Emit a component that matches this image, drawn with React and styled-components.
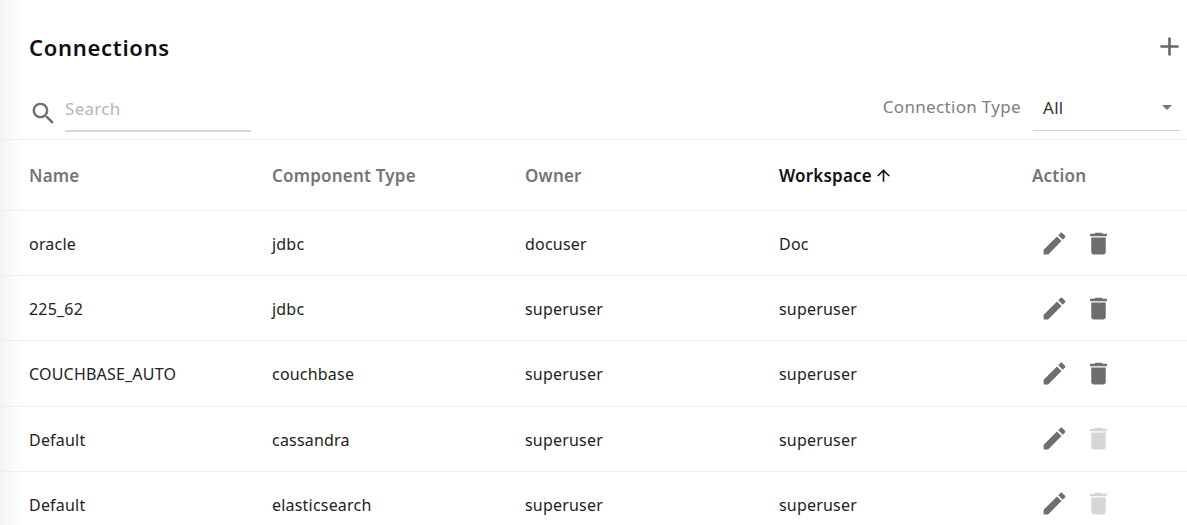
import styled, { createGlobalStyle } from "styled-components";

const GlobalStyle = createGlobalStyle`
  html, body {
    margin: 0;
    height: 100%;
    overflow: hidden;
    background: #fff;
    font-family: "Noto Sans", "Open Sans", sans-serif;
  }
`;

const Page = styled.div`
  height: 525px;
  overflow: hidden;
  background: linear-gradient(to right, #f3f3f3 0, #fbfbfb 14px, #fff 24px);
`;

const TitleBar = styled.div`
  display: flex;
  align-items: center;
  justify-content: space-between;
  height: 93px;
  padding: 0 2px 0 29px;
  box-sizing: border-box;
`;

const Title = styled.h1`
  margin: 0;
  font-size: 22px;
  font-weight: 600;
  letter-spacing: 0.7px;
  color: #111;
`;

const Toolbar = styled.div`
  display: flex;
  justify-content: space-between;
  height: 47px;
  padding: 0 7px 0 29px;
  box-sizing: border-box;
  border-bottom: 1px solid #eee;
`;

const SearchBox = styled.div`
  display: flex;
  align-items: flex-start;
  gap: 7px;
`;

const SearchField = styled.div`
  width: 186px;
  height: 39px;
  padding-top: 4px;
  box-sizing: border-box;
  border-bottom: 2px solid #d8d8d8;
  font-size: 17px;
  line-height: 24px;
  letter-spacing: 0.3px;
  color: #b5b5b5;
`;

const FilterBox = styled.div`
  display: flex;
  gap: 12px;
`;

const FilterLabel = styled.span`
  padding-top: 2px;
  font-size: 17px;
  line-height: 24px;
  letter-spacing: 0.33px;
  color: #808080;
`;

const Select = styled.div`
  display: flex;
  align-items: center;
  justify-content: space-between;
  width: 147px;
  height: 38px;
  padding: 0 8px 8px 10px;
  box-sizing: border-box;
  border-bottom: 1px solid #d4d4d4;
  font-size: 17px;
  letter-spacing: 0.3px;
  color: #333;
`;

const Caret = styled.span`
  width: 0;
  height: 0;
  border-left: 5px solid transparent;
  border-right: 5px solid transparent;
  border-top: 5px solid #757575;
`;

const Row = styled.div`
  display: grid;
  grid-template-columns: 243px 253px 254px 253px 1fr;
  align-items: center;
  height: ${(p) => (p.$header ? "71px" : "65.2px")};
  padding-left: 29px;
  box-sizing: border-box;
  border-bottom: 1px solid #eee;
`;

const HeadCell = styled.div`
  display: flex;
  align-items: center;
  gap: 2px;
  font-size: 17px;
  font-weight: 600;
  letter-spacing: 0.2px;
  color: ${(p) => (p.$active ? "#111" : "#757575")};
`;

const Cell = styled.div`
  padding-top: 2px;
  font-size: 16px;
  letter-spacing: 0.2px;
  color: #222;
`;

const Actions = styled.div`
  display: flex;
  gap: 15px;
  margin-left: 8px;
`;

const Icon = styled.svg`
  display: block;
  width: ${(p) => p.$size || 29}px;
  height: ${(p) => p.$size || 29}px;
  fill: ${(p) => p.$color || "#6e6e6e"};
  flex: none;
`;

const SearchIcon = styled(Icon)`
  margin-top: 6px;
`;

const paths = {
  add: "M19 13h-6v6h-2v-6H5v-2h6V5h2v6h6v2z",
  search:
    "M15.5 14h-.79l-.28-.27C15.41 12.59 16 11.11 16 9.5 16 5.91 13.09 3 9.5 3S3 5.91 3 9.5 5.91 16 9.5 16c1.61 0 3.09-.59 4.23-1.57l.27.28v.79l5 4.99L20.49 19l-4.99-5zm-6 0C7.01 14 5 11.99 5 9.5S7.01 5 9.5 5 14 7.01 14 9.5 11.99 14 9.5 14z",
  edit: "M3 17.25V21h3.75L17.81 9.94l-3.75-3.75L3 17.25zM20.71 7.04c.39-.39.39-1.02 0-1.41l-2.34-2.34c-.39-.39-1.02-.39-1.41 0l-1.83 1.83 3.75 3.75 1.83-1.83z",
  del: "M6 19c0 1.1.9 2 2 2h8c1.1 0 2-.9 2-2V7H6v12zM19 4h-3.5l-1-1h-5l-1 1H5v2h14V4z",
  up: "M4 12l1.41 1.41L11 7.83V20h2V7.83l5.58 5.59L20 12l-8-8-8 8z",
};

const connections = [
  { name: "oracle", type: "jdbc", owner: "docuser", workspace: "Doc", locked: false },
  { name: "225_62", type: "jdbc", owner: "superuser", workspace: "superuser", locked: false },
  { name: "COUCHBASE_AUTO", type: "couchbase", owner: "superuser", workspace: "superuser", locked: false },
  { name: "Default", type: "cassandra", owner: "superuser", workspace: "superuser", locked: true },
  { name: "Default", type: "elasticsearch", owner: "superuser", workspace: "superuser", locked: true },
];

export default function App() {
  return (
    <Page>
      <GlobalStyle />
      <TitleBar>
        <Title>Connections</Title>
        <Icon viewBox="0 0 24 24" $size={31} $color="#666">
          <path d={paths.add} />
        </Icon>
      </TitleBar>
      <Toolbar>
        <SearchBox>
          <SearchIcon viewBox="0 0 24 24">
            <path d={paths.search} />
          </SearchIcon>
          <SearchField>Search</SearchField>
        </SearchBox>
        <FilterBox>
          <FilterLabel>Connection Type</FilterLabel>
          <Select>
            All
            <Caret />
          </Select>
        </FilterBox>
      </Toolbar>
      <Row $header>
        <HeadCell>Name</HeadCell>
        <HeadCell>Component Type</HeadCell>
        <HeadCell>Owner</HeadCell>
        <HeadCell $active>
          Workspace
          <Icon viewBox="0 0 24 24" $size={19} $color="#111">
            <path d={paths.up} />
          </Icon>
        </HeadCell>
        <HeadCell>Action</HeadCell>
      </Row>
      {connections.map((c, i) => (
        <Row key={i}>
          <Cell>{c.name}</Cell>
          <Cell>{c.type}</Cell>
          <Cell>{c.owner}</Cell>
          <Cell>{c.workspace}</Cell>
          <Actions>
            <Icon viewBox="0 0 24 24">
              <path d={paths.edit} />
            </Icon>
            <Icon viewBox="0 0 24 24" $color={c.locked ? "#d6d6d6" : "#6e6e6e"}>
              <path d={paths.del} />
            </Icon>
          </Actions>
        </Row>
      ))}
    </Page>
  );
}
